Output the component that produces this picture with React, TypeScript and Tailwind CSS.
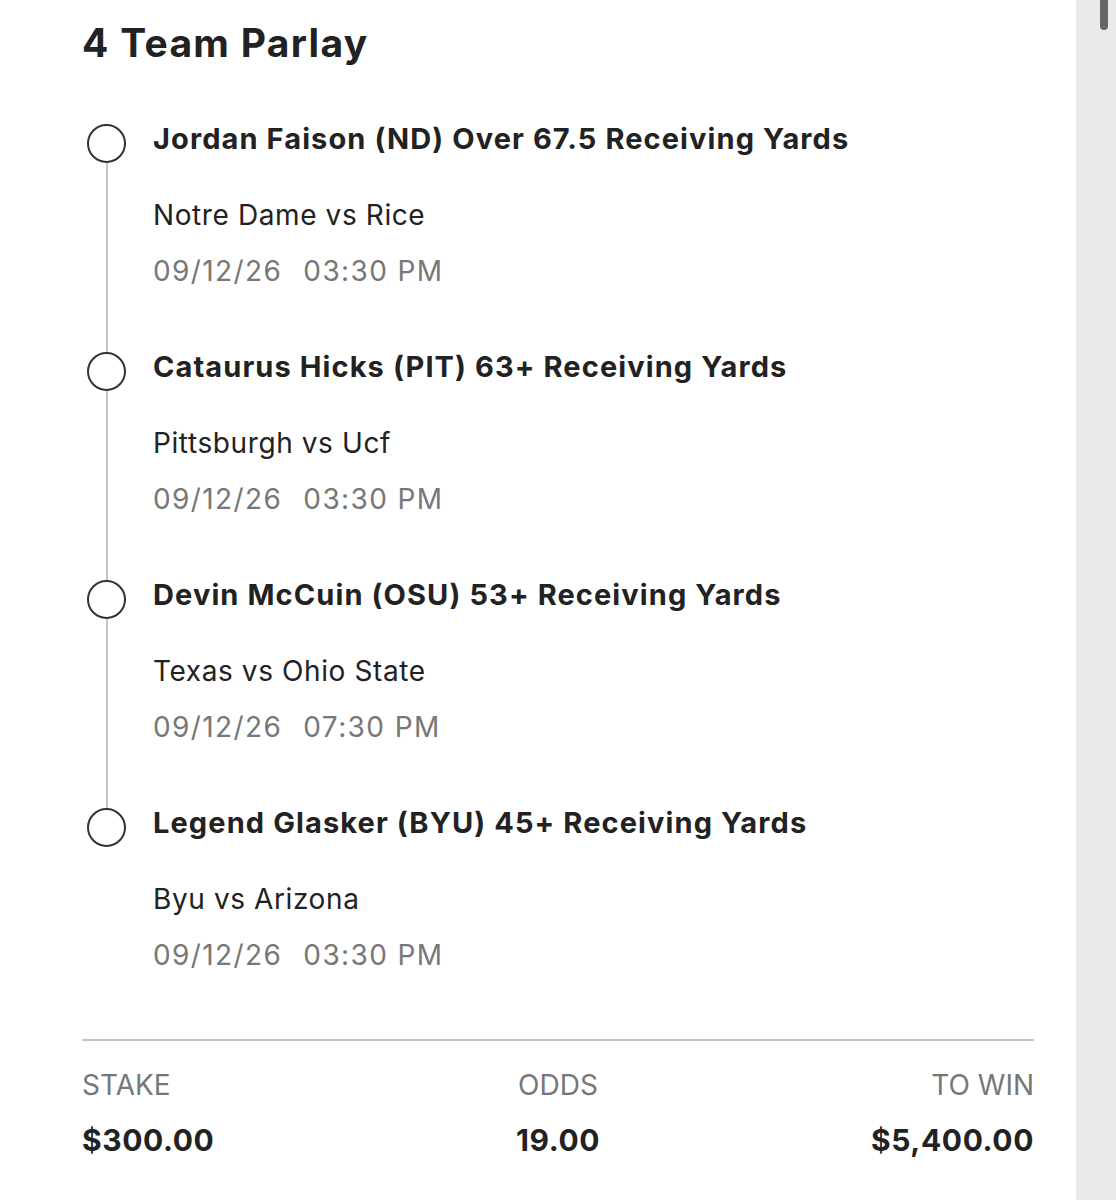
import React from "react";

const legs = [
  {
    pick: "Jordan Faison (ND) Over 67.5 Receiving Yards",
    game: "Notre Dame vs Rice",
    date: "09/12/26",
    time: "03:30 PM",
  },
  {
    pick: "Cataurus Hicks (PIT) 63+ Receiving Yards",
    game: "Pittsburgh vs Ucf",
    date: "09/12/26",
    time: "03:30 PM",
  },
  {
    pick: "Devin McCuin (OSU) 53+ Receiving Yards",
    game: "Texas vs Ohio State",
    date: "09/12/26",
    time: "07:30 PM",
  },
  {
    pick: "Legend Glasker (BYU) 45+ Receiving Yards",
    game: "Byu vs Arizona",
    date: "09/12/26",
    time: "03:30 PM",
  },
];

const Leg = ({ leg, last }) => (
  <div className="flex h-[228px]">
    <div className="flex w-[39px] flex-col items-center">
      <div className="size-[39px] shrink-0 rounded-full border-2 border-[#333]" />
      {!last && <div className="w-[2px] flex-1 bg-[#c4c4c4]" />}
    </div>
    <div className="ml-[27px] flex flex-col">
      <div className="-mt-[5px] whitespace-nowrap text-[29px] leading-[39px] font-bold tracking-[1.1px] text-[#222]">
        {leg.pick}
      </div>
      <div className="mt-[42px] text-[28px] leading-[30px] tracking-[0.6px] text-[#222]">{leg.game}</div>
      <div className="mt-[26px] text-[28px] leading-[30px] tracking-[1.4px] text-[#777]">
        {leg.date}
        <span className="ml-[21px]">{leg.time}</span>
      </div>
    </div>
  </div>
);

export default function App() {
  return (
    <div
      className="flex min-h-[1200px] bg-white"
      style={{ fontFamily: "Inter, 'Noto Sans', sans-serif" }}
    >
      <div className="w-[1076px] shrink-0 pl-[82px] pr-[42px]">
        <h1 className="pt-[19px] text-[39px] leading-[48px] font-bold tracking-[1.3px] text-[#222]">4 Team Parlay</h1>
        <div className="mt-[57px] pl-[5px]">
          {legs.map((leg, i) => (
            <Leg key={i} leg={leg} last={i === legs.length - 1} />
          ))}
        </div>
        <div className="mt-[3px] border-t-2 border-[#c4c4c4]" />
        <div className="mt-[28px] grid grid-cols-3 text-[#777] text-[28px] leading-[32px]">
          <div>STAKE</div>
          <div className="text-center">ODDS</div>
          <div className="text-right">TO WIN</div>
        </div>
        <div className="mt-[23px] grid grid-cols-3 text-[30px] leading-[32px] font-bold tracking-[0.6px] text-[#222]">
          <div>$300.00</div>
          <div className="text-center">19.00</div>
          <div className="text-right">$5,400.00</div>
        </div>
      </div>
      <div className="relative flex-1 bg-[#e9e9e9]">
        <div className="absolute left-[24px] top-0 h-[30px] w-[8px] rounded-b-full bg-[#666]" />
      </div>
    </div>
  );
}
